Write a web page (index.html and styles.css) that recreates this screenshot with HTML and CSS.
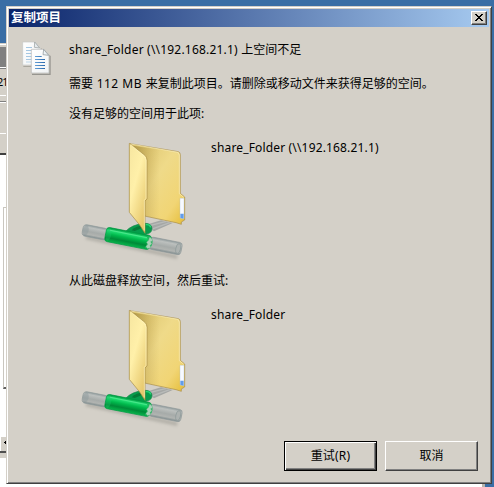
FILE: index.html
```html
<!DOCTYPE html>
<html lang="zh-CN">
<head>
<meta charset="utf-8">
<title>复制项目</title>
<link rel="stylesheet" href="styles.css">
</head>
<body>
<div class="back-window">
  <div class="back-title"></div>
  <div class="back-address">21</div>
  <div class="back-tools"></div>
  <div class="back-client"><div class="back-group"></div></div>
  <div class="back-scroll"><svg width="5" height="11" viewBox="0 0 5 11" shape-rendering="crispEdges"><path d="M3 5h2v1H3zM4 4h1v3H4z"/></svg></div>
  <div class="back-line"></div>
</div>
<div class="back-foot"></div>
<main class="dialog">
  <header class="titlebar">
    <h1>复制项目</h1>
    <button class="close" aria-label="关闭"><svg width="8" height="7" viewBox="0 0 8 7" shape-rendering="crispEdges"><path d="M0 0h2v1H0zM6 0h2v1H6zM1 1h2v1H1zM5 1h2v1H5zM2 2h4v1H2zM3 3h2v1H3zM2 4h4v1H2zM1 5h2v1H1zM5 5h2v1H5zM0 6h2v1H0zM6 6h2v1H6z"/></svg></button>
  </header>
  <div class="content">
    <svg class="copy-icon" width="30" height="36" viewBox="0 0 90 108">
      <defs>
        <linearGradient id="paper" x1="0" y1="0" x2="1" y2="1"><stop stop-color="#fff"/><stop offset="1" stop-color="#f1f3f4"/></linearGradient>
        <linearGradient id="ink"><stop stop-color="#65a0d8"/><stop offset="1" stop-color="#2868ac"/></linearGradient>
      </defs>
      <path d="M4 75h52V24l4-2v56H4z" fill="#aaa89f"/>
      <path d="M2 3h37l16 18v51H2z" fill="url(#paper)" stroke="#c5c7c5" stroke-width="2"/>
      <path d="M38 3l-1 16 16 2z" fill="#e5eaed" stroke="#929999" stroke-width="2"/>
      <path d="M12 19h18v2H12zM12 27h20v2H12zM12 36h20v2H12zM12 45h20v2H12zM12 54h20v2H12zM12 62h20v2H12z" fill="#89b6da"/>
      <path d="M30 98h52V42l4 3v57H30z" fill="#96958f"/>
      <path d="M28 25h37l16 17v54H28z" fill="url(#paper)" stroke="#b4b5b4" stroke-width="2"/>
      <path d="M65 25l-2 16 17 2z" fill="#edf2f5" stroke="#858e91" stroke-width="2"/>
      <path d="M39 45h20v3H39zM39 54h30v3H39zM39 63h30v3H39zM39 72h30v3H39zM39 81h30v3H39z" fill="url(#ink)"/>
    </svg>
    <section class="message">
      <p class="line"><span class="path">share_Folder (\\192.168.21.1) </span>上空间不足</p>
      <p class="line detail">需要<span class="size"> 112 MB </span>来复制此项目。请删除或移动文件来获得足够的空间。</p>
      <p class="line source">没有足够的空间用于此项:</p>
      <div class="item">
        <svg class="folder" width="130" height="140" viewBox="0 0 390 420">
          <defs>
            <linearGradient id="back" x1="0" y1="0" x2="1" y2="1"><stop stop-color="#d7be67"/><stop offset=".45" stop-color="#efda89"/><stop offset=".78" stop-color="#f1d575"/><stop offset="1" stop-color="#e5bd38"/></linearGradient>
            <linearGradient id="shade"><stop stop-color="#8d762f" stop-opacity=".65"/><stop offset="1" stop-color="#b69642" stop-opacity="0"/></linearGradient>
            <linearGradient id="front" x1="0" y1="0" x2=".7" y2="1"><stop stop-color="#f6e6a0"/><stop offset=".45" stop-color="#fff0a9"/><stop offset="1" stop-color="#e5c568"/></linearGradient>
            <linearGradient id="tube" x1="0" y1="0" x2="0" y2="1"><stop stop-color="#909b9c"/><stop offset=".2" stop-color="#bcc0be"/><stop offset=".55" stop-color="#a6aba9"/><stop offset=".8" stop-color="#b1b4b1"/><stop offset="1" stop-color="#7d8a8c"/></linearGradient>
            <linearGradient id="green" x1="0" y1="0" x2="0" y2="1"><stop stop-color="#00953f"/><stop offset=".2" stop-color="#22df73"/><stop offset=".45" stop-color="#00b94c"/><stop offset=".72" stop-color="#008a38"/><stop offset="1" stop-color="#08b64c"/></linearGradient>
            <filter id="soft" x="-20%" y="-50%" width="140%" height="200%"><feGaussianBlur stdDeviation="4"/></filter>
            <g id="network-folder">
              <path d="M48 322L322 381" stroke="#77776f" stroke-width="12" opacity=".35" filter="url(#soft)"/>
              <path d="M226 285L273 271 308 279 252 304z" fill="#a5a7a5"/>
              <path d="M239 287l50-13M244 298l55-20" stroke="#b9bbb9" stroke-width="4"/>
              <path d="M180 41L325 65Q331 67 331 74V190L344 201V270L334 276V283L318 278 228 259 180 245z" fill="url(#back)" stroke="#a78c49" stroke-width="2"/>
              <path d="M189 47L269 59V267L228 259 180 245z" fill="url(#shade)"/>
              <path d="M182 42L324 67 328 75V191L341 202" fill="none" stroke="#faeeb9" stroke-width="2"/>
              <path d="M330 205h12v61l-12-2z" fill="#f7faff" stroke="#adbed0" stroke-width="1"/>
              <path d="M331 251h10v15l-10-2z" fill="#619cea"/>
              <path d="M166 305Q184 284 223 280 244 279 246 295 246 310 228 313L202 320z" fill="#079c4c" stroke="#188548" stroke-width="2"/>
              <path d="M185 301Q197 287 224 286L216 294 194 303z" fill="#067a37"/>
              <path d="M227 284Q240 282 242 292" fill="none" stroke="#28d777" stroke-width="4"/>
              <path d="M178 40L225 76Q231 82 231 90V207L225 213V310L209 285 178 247z" fill="url(#front)" stroke="#a68c46" stroke-width="2"/>
              <path d="M182 44L223 79 228 91V205L223 211V302" fill="none" stroke="#fff5c0" stroke-width="2"/>
              <g transform="translate(43 300) rotate(11.2)">
                <rect x="-5" y="-17" width="76" height="35" rx="11" fill="url(#tube)" stroke="#909b9c" stroke-width="2"/>
                <ellipse cx="4" cy="0" rx="9" ry="15" fill="#8f9c9d" opacity=".5"/>
                <rect x="199" y="-19" width="98" height="37" rx="9" fill="url(#tube)" stroke="#8d9899" stroke-width="2"/>
                <ellipse cx="287" cy="0" rx="7" ry="15" fill="#adb2b0" stroke="#8b9798" stroke-width="2"/>
                <rect x="65" y="-22" width="137" height="43" rx="9" fill="url(#green)" stroke="#009b43" stroke-width="2"/>
                <ellipse cx="74" cy="-1" rx="8" ry="19" fill="#27c874" opacity=".3"/>
                <path d="M76-14h114" stroke="#4be78b" stroke-width="3"/>
                <path d="M188-18q10 18 0 36h8q12-4 12-18 0-14-11-18z" fill="#20b75c"/>
                <path d="M196-17q10 1 11 10l-5 3 5 5-5 7 4 3q-3 6-10 7l-5-5 4-8-5-5 5-7z" fill="#a9d2b7" stroke="#55aa77" stroke-width="1"/>
              </g>
            </g>
          </defs>
          <use href="#network-folder"/>
        </svg>
        <span class="name">share_Folder (\\192.168.21.1)</span>
      </div>
      <p class="line release">从此磁盘释放空间，然后重试:</p>
      <div class="item second">
        <svg class="folder" width="130" height="140" viewBox="0 0 390 420"><use href="#network-folder"/></svg>
        <span class="name">share_Folder</span>
      </div>
    </section>
  </div>
  <footer class="actions"><button class="action default">重试(R)</button><button class="action">取消</button></footer>
</main>
</body>
</html>
```
FILE: styles.css
```css
* { box-sizing: border-box; }
body {
  margin: 0;
  height: 487px;
  overflow: hidden;
  background: #3a6ea5;
  font: 12px/18px "Noto Sans", "Noto Sans CJK SC", sans-serif;
  color: #000;
}
h1, p { margin: 0; }
button { padding: 0; font: inherit; color: inherit; }
svg { display: block; flex: none; }

.back-window {
  position: absolute;
  left: 0;
  top: 43px;
  width: 6px;
  height: 444px;
  overflow: hidden;
  background: #fff;
  border-top: 1px solid #d4d0c8;
}
.back-title { height: 22px; margin-top: 1px; background: #808080; border-top: 2px solid #d4d0c8; }
.back-address {
  height: 28px;
  margin-top: 1px;
  padding-top: 4px;
  background: #d4d0c8;
  border-top: 1px solid #808080;
  border-bottom: 1px solid #fff;
  font-size: 11px;
  text-indent: -3px;
  letter-spacing: -1px;
}
.back-tools {
  height: 59px;
  background: linear-gradient(#d4d0c8 5px, #808080 5px 6px, #fff 6px 7px, #d4d0c8 7px 37px, #fff 37px 38px, #d4d0c8 38px);
  border-bottom: 2px solid #404040;
}
.back-client { height: 281px; padding: 52px 0 0 3px; }
.back-group { height: 182px; border: 1px solid #c9c6bf; border-right: 0; border-bottom: 2px solid #606060; box-shadow: inset 2px 1px #fff; background: #d4d0c8; }
.back-scroll { height: 14px; margin-top: 1px; background: #d4d0c8; border-left: 1px solid #fff; }
.back-line { height: 7px; background: #d4d0c8; border-top: 2px solid #505050; }
.back-foot { position: absolute; left: 0; right: 9px; bottom: 0; height: 7px; background: #fff; border-right: 3px solid #b8b5ae; }

.dialog {
  position: absolute;
  left: 6px;
  top: 6px;
  width: 486px;
  height: 478px;
  padding: 1px;
  background: #d4d0c8;
  border: 1px solid #d4d0c8;
  border-right-color: #404040;
  border-bottom-color: #404040;
  box-shadow: inset 1px 1px #fff, inset -1px -1px #808080;
}
.titlebar {
  display: flex;
  align-items: center;
  justify-content: space-between;
  height: 18px;
  margin: 1px 1px 0;
  padding: 0 2px;
  background: linear-gradient(90deg, #0a246a, #a6caf0);
}
.titlebar h1 { color: #fff; font-size: 12.5px; line-height: 18px; font-weight: 700; }
.close {
  display: flex;
  align-items: flex-start;
  justify-content: center;
  width: 16px;
  height: 14px;
  padding-top: 2px;
  background: #d4d0c8;
  border: 1px solid #fff;
  border-right-color: #404040;
  border-bottom-color: #404040;
  box-shadow: inset -1px -1px #808080;
}
.content { display: flex; height: 414px; padding: 14px 0 0 14px; }
.copy-icon { margin-right: 17px; }
.line { height: 18px; white-space: pre; }
.path { letter-spacing: .2px; }
.size { letter-spacing: .5px; }
.detail { margin-top: 16px; }
.source { margin-top: 12px; }
.item { display: flex; height: 140px; margin: 7px 0 0 1px; }
.name { margin: 9px 0 0 11px; white-space: pre; letter-spacing: .16px; }
.release { margin-top: 2px; }
.actions { display: flex; justify-content: flex-end; gap: 8px; padding-right: 12px; }
.action {
  width: 93px;
  height: 30px;
  background: #d4d0c8;
  border: 1px solid #fff;
  border-right-color: #404040;
  border-bottom-color: #404040;
  box-shadow: inset -1px -1px #808080;
}
.action.default { border-color: #000; letter-spacing: .2px; box-shadow: inset 1px 1px #fff, inset -1px -1px #404040, inset -2px -2px #808080; }
```
